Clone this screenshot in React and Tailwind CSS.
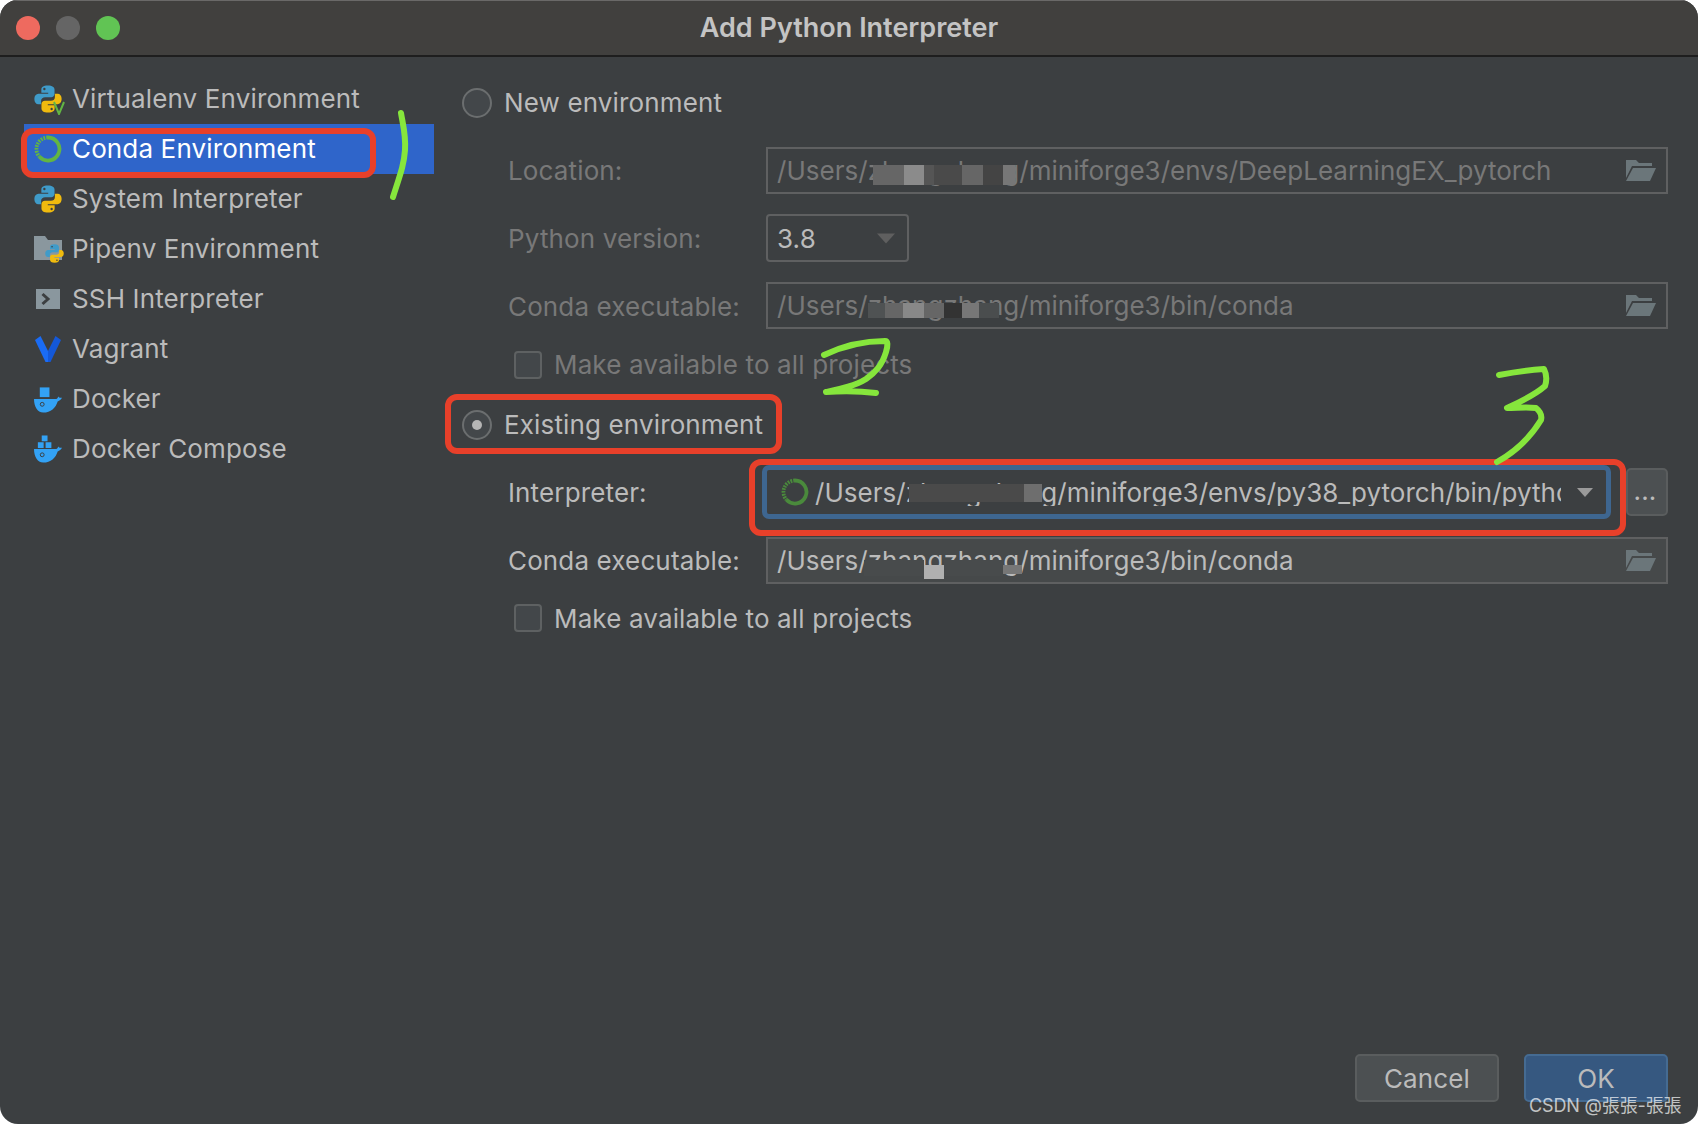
import React from 'react'

const FONT = "font-['Inter','Liberation_Sans',sans-serif]"

const PythonLogo = ({ className = 'w-[28px] h-[28px]' }) => (
  <svg viewBox="0 0 24 24" className={className}>
    <path fill="#3f9bc9" d="M11.9 0.4C7.6 0.4 6.3 2 6.3 3.9V6.6H12.2V7.6H3.9C1.8 7.6 0.3 9.4 0.3 12C0.3 14.8 1.7 16.5 3.8 16.5H6.1V13.6C6.1 11.7 7.7 10.5 9.5 10.5H14.7C16.4 10.5 17.6 9.3 17.6 7.6V3.9C17.6 1.9 15.8 0.4 11.9 0.4Z" />
    <circle cx="8.9" cy="3.4" r="1" fill="#3c3f41" />
    <path fill="#f0bb0e" d="M12.1 23.6C16.4 23.6 17.7 22 17.7 20.1V17.4H11.8V16.4H20.1C22.2 16.4 23.7 14.6 23.7 12C23.7 9.2 22.3 7.5 20.2 7.5H17.9V10.4C17.9 12.3 16.3 13.5 14.5 13.5H9.3C7.6 13.5 6.4 14.7 6.4 16.4V20.1C6.4 22.1 8.2 23.6 12.1 23.6Z" />
    <circle cx="15.1" cy="20.6" r="1" fill="#3c3f41" />
  </svg>
)

const CondaRing = ({ color = '#62b543' }) => (
  <svg viewBox="0 0 28 28" className="w-[28px] h-[28px] shrink-0">
    <path d="M14 2.5A11.5 11.5 0 1 1 5.5 21.8" fill="none" stroke={color} strokeWidth="3.8" />
    <path d="M14 2.5A11.5 11.5 0 0 0 5.5 21.8" fill="none" stroke={color} strokeWidth="3.8" strokeDasharray="1.8 1" />
  </svg>
)

const VenvIcon = () => (
  <div className="relative w-[28px] h-[28px]">
    <PythonLogo />
    <svg viewBox="0 0 14 14" className="absolute left-[18px] top-[16px] w-[14px] h-[14px]">
      <path d="M2 1L7 13L12 1" fill="none" stroke="#62b543" strokeWidth="2" />
    </svg>
  </div>
)

const PipenvIcon = () => (
  <div className="relative w-[28px] h-[28px]">
    <svg viewBox="0 0 28 28" className="w-[28px] h-[28px]">
      <path d="M0 1H11L14 5H28V25H0Z" fill="#8a979e" />
    </svg>
    <PythonLogo className="absolute left-[11px] top-[9px] w-[19px] h-[19px]" />
  </div>
)

const SshIcon = () => (
  <svg viewBox="0 0 28 28" className="w-[28px] h-[28px]">
    <rect x="2" y="4" width="24" height="20" fill="#8a979e" />
    <path d="M8.5 9L14 14L8.5 19" fill="none" stroke="#3c3f41" strokeWidth="3" />
  </svg>
)

const VagrantIcon = () => (
  <svg viewBox="0 0 28 28" className="w-[28px] h-[28px]">
    <path d="M1 5L6.5 1L14 16V27H11.5Z" fill="#1a6cf5" />
    <path d="M27 5L21.5 1L14 16V27H16.5Z" fill="#1458d8" />
  </svg>
)

const Whale = () => (
  <path d="M0 14H23C24 14 24.7 13 25 11.5C25.8 12.6 27 13 29 12.7C28 14.5 26.5 15.8 24.5 16.5C22.5 23 17.5 28 9.5 28C3.5 28 0 21.5 0 14Z" fill="#33a2f5" />
)

const DockerIcon = () => (
  <svg viewBox="0 0 29 28" className="w-[29px] h-[28px]">
    <rect x="6" y="2" width="10" height="10" fill="#33a2f5" />
    <Whale />
    <circle cx="8.5" cy="19.5" r="2" fill="none" stroke="#3c3f41" strokeWidth="1" />
  </svg>
)

const ComposeIcon = () => (
  <svg viewBox="0 0 29 28" className="w-[29px] h-[28px]">
    <rect x="8" y="0" width="6" height="6" fill="#33a2f5" />
    <rect x="4" y="7" width="6" height="6" fill="#33a2f5" />
    <rect x="12" y="7" width="6" height="6" fill="#33a2f5" />
    <Whale />
    <circle cx="8.5" cy="20" r="2" fill="none" stroke="#3c3f41" strokeWidth="1" />
  </svg>
)

const FolderOpen = () => (
  <svg viewBox="0 0 31 23" className="w-[31px] h-[23px] shrink-0">
    <path d="M1 1H11L14 4H27V7H7L1 19Z" fill="#6b767a" />
    <path d="M8 9H31L25 22H1Z" fill="#6b767a" />
  </svg>
)

const Arrow = ({ color, w = 16, h = 9 }) => (
  <svg viewBox="0 0 16 9" style={{ width: w, height: h }}>
    <path d="M0 0H16L8 9Z" fill={color} />
  </svg>
)

const Radio = ({ checked }) => (
  <div className="w-[30px] h-[30px] rounded-full border-2 border-[#6b6e6f] bg-[#43474a] flex items-center justify-center shrink-0">
    {checked && <div className="w-[10px] h-[10px] rounded-full bg-[#b5b5b5]" />}
  </div>
)

const Checkbox = () => (
  <div className="w-[28px] h-[28px] rounded-[4px] border-2 border-[#5e6162] bg-[#43474a] shrink-0" />
)

const PathField = ({ text, disabled, filled }) => (
  <div className={`flex-1 min-w-0 h-[47px] border-2 border-[#5f6061] flex items-center pl-[9px] pr-[10px] justify-between ${filled ? 'bg-[#46494a]' : ''}`}>
    <span className={`pt-[1px] tracking-[0.03px] ${disabled ? 'text-[#787878]' : 'text-[#bbbbbb]'}`}>{text}</span>
    <FolderOpen />
  </div>
)

const sidebarItems = [
  ['Virtualenv Environment', <VenvIcon />],
  ['Conda Environment', <CondaRing />],
  ['System Interpreter', <PythonLogo />],
  ['Pipenv Environment', <PipenvIcon />],
  ['SSH Interpreter', <SshIcon />],
  ['Vagrant', <VagrantIcon />],
  ['Docker', <DockerIcon />],
  ['Docker Compose', <ComposeIcon />],
]

// redaction smears from the screenshot: x, y, w, h, colour
const smears = [
  [873, 165, 31, 20, '#666666'], [904, 165, 20, 20, '#8b8b8b'], [924, 165, 10, 20, '#555555'], [934, 165, 28, 20, '#4a4a4a'],
  [962, 165, 21, 20, '#666666'], [983, 165, 20, 20, '#444444'], [1003, 165, 12, 20, '#777777'],
  [868, 303, 17, 15, '#4f5253'], [885, 303, 18, 15, '#666666'], [903, 303, 21, 15, '#888888'], [924, 303, 20, 15, '#666666'],
  [944, 303, 18, 15, '#333333'], [962, 303, 17, 15, '#777777'], [979, 303, 20, 15, '#4a4d4e'],
  [909, 484, 115, 18, '#4a4a4a'], [1024, 484, 18, 18, '#6e6e6e'],
  [864, 560, 60, 16, '#484b4c'], [924, 565, 20, 14, '#b0b0b0'], [944, 560, 59, 16, '#484b4c'], [1003, 565, 19, 9, '#777777'],
]

const redBoxes = [
  [24, 131, 349, 44, 9],
  [448, 397, 331, 54, 9],
  [752, 462, 871, 71, 9],
]

const Annotations = () => (
  <svg viewBox="0 0 1698 1124" className="absolute inset-0 w-full h-full pointer-events-none">
    {smears.map(([x, y, w, h, c], i) => (
      <rect key={i} x={x} y={y} width={w} height={h} fill={c} />
    ))}
    {redBoxes.map(([x, y, w, h, r], i) => (
      <rect key={i} x={x} y={y} width={w} height={h} rx={r} fill="none" stroke="#e8402a" strokeWidth="6" />
    ))}
    <g fill="none" stroke="#86e63c" strokeWidth="6" strokeLinecap="round" strokeLinejoin="round">
      <path d="M401 113C403 125 406 135 405 150C404 165 400 175 393 197" />
      <path d="M824 355C845 345 865 341 885 341C888 341 888 345 886 352C882 365 876 372 866 379C855 386 840 389 826 392C840 391 860 391 876 393" />
      <path d="M1499 375C1515 372 1530 370 1544 369C1547 375 1547 380 1545 386C1535 395 1520 402 1507 408C1517 408 1527 407 1536 408C1541 412 1542 416 1541 420C1530 438 1515 452 1497 462" />
    </g>
  </svg>
)

export default function App() {
  return (
    <div className={`relative w-[1698px] h-[1124px] bg-white overflow-hidden text-[26px] leading-none tracking-[0.14px] ${FONT}`}>
      <div className="w-full h-full rounded-[18px] overflow-hidden bg-[#3c3f41] flex flex-col text-[#bbbbbb]">
        <div className="h-[57px] shrink-0 relative flex items-center justify-center bg-[#41403e] border-b-2 border-[#1e1e1e] border-t border-t-[#6a6968]">
          <div className="absolute left-[16px] top-[15px] flex gap-[16px]">
            <div className="w-[24px] h-[24px] rounded-full bg-[#ee6a5f]" />
            <div className="w-[24px] h-[24px] rounded-full bg-[#656565]" />
            <div className="w-[24px] h-[24px] rounded-full bg-[#61c454]" />
          </div>
          <span className="font-semibold text-[27px] tracking-normal text-[#c4c4c4] pb-[2px]">Add Python Interpreter</span>
        </div>

        <div className="flex-1 flex min-h-0">
          <div className="w-[434px] shrink-0 pl-[24px] pt-[17px]">
            {sidebarItems.map(([label, icon]) => (
              <div
                key={label}
                className={`h-[50px] flex items-center gap-[10px] pl-[10px] ${label === 'Conda Environment' ? 'bg-[#2f65ca] text-white' : ''}`}
              >
                <div className="w-[28px] flex justify-center">{icon}</div>
                <span>{label}</span>
              </div>
            ))}
          </div>

          <div className="flex-1 min-w-0 flex flex-col pl-[28px] pr-[30px] pt-[31px] pb-[22px]">
            <div className="flex items-center gap-[12px] h-[30px]">
              <Radio />
              <span>New environment</span>
            </div>

            <div className="flex items-center mt-[29px] ml-[46px]">
              <span className="w-[258px] pt-[1px] text-[#787878]">Location:</span>
              <PathField disabled text="/Users/zhangzhang/miniforge3/envs/DeepLearningEX_pytorch" />
            </div>

            <div className="flex items-center mt-[20px] ml-[46px]">
              <span className="w-[258px] pt-[2px] text-[#787878]">Python version:</span>
              <div className="w-[143px] h-[48px] border-2 border-[#5f6061] rounded-[4px] flex items-center justify-between pl-[9px] pr-[12px]">
                <span className="pt-[2px]">3.8</span>
                <Arrow color="#5f5f5f" w={18} h={11} />
              </div>
            </div>

            <div className="flex items-center mt-[20px] ml-[46px]">
              <span className="w-[258px] pt-[2px] text-[#787878]">Conda executable:</span>
              <PathField disabled text="/Users/zhangzhang/miniforge3/bin/conda" />
            </div>

            <div className="flex items-center gap-[12px] mt-[22px] ml-[52px] text-[#787878]">
              <Checkbox />
              <span>Make available to all projects</span>
            </div>

            <div className="flex items-center gap-[12px] h-[30px] mt-[31px]">
              <Radio checked />
              <span>Existing environment</span>
            </div>

            <div className="flex items-center mt-[25px] ml-[46px]">
              <span className="w-[254px] pt-[2px]">Interpreter:</span>
              <div className="flex-1 min-w-0 h-[54px] rounded-[7px] border-[5px] border-[#3e6690] flex items-center pl-[14px] pr-[13px]">
                <CondaRing color="#4a8a3c" />
                <span className="ml-[6px] pt-[2px] tracking-[0.03px] flex-1 min-w-0 overflow-hidden whitespace-nowrap">/Users/zhangzhang/miniforge3/envs/py38_pytorch/bin/python</span>
                <div className="ml-[16px] flex">
                  <Arrow color="#9a9a9a" />
                </div>
              </div>
              <div className="w-[42px] h-[48px] ml-[15px] rounded-[5px] bg-[#4c5052] border-2 border-[#5a5d5e] flex items-end justify-center pb-[10px] pr-[4px]">
                <span>...</span>
              </div>
            </div>

            <div className="flex items-center mt-[18px] ml-[46px]">
              <span className="w-[258px] pt-[1px]">Conda executable:</span>
              <PathField filled text="/Users/zhangzhang/miniforge3/bin/conda" />
            </div>

            <div className="flex items-center gap-[12px] mt-[20px] ml-[52px]">
              <Checkbox />
              <span className="pt-[2px]">Make available to all projects</span>
            </div>

            <div className="mt-auto flex justify-end gap-[25px]">
              <div className="w-[144px] h-[48px] pt-[2px] rounded-[5px] bg-[#4c5052] border-2 border-[#5a5d5e] flex items-center justify-center">Cancel</div>
              <div className="w-[144px] h-[48px] pt-[2px] rounded-[5px] bg-[#365880] border-2 border-[#456b92] flex items-center justify-center">OK</div>
            </div>
          </div>
        </div>
      </div>

      <Annotations />
      <span className="absolute left-[1529px] top-[1095px] text-[18px] leading-[22px] tracking-[-0.15px] text-white/70 font-['Inter','Noto_Sans_CJK_TC',sans-serif]">CSDN @張張-張張</span>
    </div>
  )
}
